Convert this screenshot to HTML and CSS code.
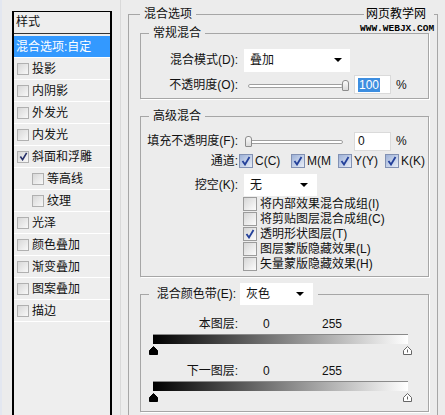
FILE: index.html
```html
<!DOCTYPE html>
<html>
<head>
    <meta charset="utf-8">
    <link rel="stylesheet" href="styles.css">
</head>
<body>
    <div class="page">
        <div class="side">
            <div class="styles-list">
                <div class="list-head">样式</div>
                <div class="list-item selected">混合选项:自定</div>
                <div class="list-item"><span class="box"></span>投影</div>
                <div class="list-item"><span class="box"></span>内阴影</div>
                <div class="list-item"><span class="box"></span>外发光</div>
                <div class="list-item"><span class="box"></span>内发光</div>
                <div class="list-item"><span class="box"><svg width="9" height="9" viewBox="0 0 10 10"><path d="M1.5 5 L4 8.5 L8.5 1" fill="none" stroke="#27306a" stroke-width="1.8"/></svg></span>斜面和浮雕</div>
                <div class="list-item sub"><span class="box"></span>等高线</div>
                <div class="list-item sub"><span class="box"></span>纹理</div>
                <div class="list-item"><span class="box"></span>光泽</div>
                <div class="list-item"><span class="box"></span>颜色叠加</div>
                <div class="list-item"><span class="box"></span>渐变叠加</div>
                <div class="list-item"><span class="box"></span>图案叠加</div>
                <div class="list-item"><span class="box"></span>描边</div>
            </div>
        </div>

        <div class="main">
            <fieldset class="outer">
                <legend>混合选项</legend>

                <fieldset class="group general">
                    <legend>常规混合</legend>
                    <div class="row first">
                        <span class="label">混合模式(D):</span>
                        <div class="select wide">叠加<span class="arrow"></span></div>
                    </div>
                    <div class="row tall">
                        <span class="label">不透明度(O):</span>
                        <div class="slider"><span class="track"></span><span class="thumb" style="left: 94px"></span></div>
                        <div class="num"><span class="sel">100</span></div>
                        <span class="pct">%</span>
                    </div>
                </fieldset>

                <fieldset class="group advanced">
                    <legend>高级混合</legend>
                    <div class="row fill">
                        <span class="label">填充不透明度(F):</span>
                        <div class="slider"><span class="track"></span><span class="thumb" style="left: -3px"></span></div>
                        <div class="num">0</div>
                        <span class="pct">%</span>
                    </div>
                    <div class="row channels">
                        <span class="label tight">通道:</span>
                        <div class="chan c"><span class="cb on"><svg width="10" height="10" viewBox="0 0 10 10"><path d="M1.5 5 L4 8.5 L8.5 1" fill="none" stroke="#23409a" stroke-width="1.8"/></svg></span><span class="chan-text">C(C)</span></div>
                        <div class="chan m"><span class="cb on"><svg width="10" height="10" viewBox="0 0 10 10"><path d="M1.5 5 L4 8.5 L8.5 1" fill="none" stroke="#23409a" stroke-width="1.8"/></svg></span><span class="chan-text">M(M</span></div>
                        <div class="chan y"><span class="cb on"><svg width="10" height="10" viewBox="0 0 10 10"><path d="M1.5 5 L4 8.5 L8.5 1" fill="none" stroke="#23409a" stroke-width="1.8"/></svg></span><span class="chan-text">Y(Y)</span></div>
                        <div class="chan k"><span class="cb on"><svg width="10" height="10" viewBox="0 0 10 10"><path d="M1.5 5 L4 8.5 L8.5 1" fill="none" stroke="#23409a" stroke-width="1.8"/></svg></span><span class="chan-text">K(K)</span></div>
                    </div>
                    <div class="row knockout">
                        <span class="label">挖空(K):</span>
                        <div class="select narrow">无<span class="arrow"></span></div>
                    </div>
                    <div class="checks">
                        <div class="check"><span class="cb"></span>将内部效果混合成组(I)</div>
                        <div class="check"><span class="cb"></span>将剪贴图层混合成组(C)</div>
                        <div class="check"><span class="cb"><svg width="10" height="10" viewBox="0 0 10 10"><path d="M1.5 5 L4 8.5 L8.5 1" fill="none" stroke="#23409a" stroke-width="1.8"/></svg></span>透明形状图层(T)</div>
                        <div class="check"><span class="cb"></span>图层蒙版隐藏效果(L)</div>
                        <div class="check"><span class="cb"></span>矢量蒙版隐藏效果(H)</div>
                    </div>
                </fieldset>

                <fieldset class="group band">
                    <legend class="band-legend">
                        <span class="label">混合颜色带(E):</span>
                        <div class="select narrow">灰色<span class="arrow"></span></div>
                    </legend>
                    <div class="layer-row">
                        <span class="label">本图层:</span>
                        <span class="v0">0</span>
                        <span>255</span>
                    </div>
                    <div class="bar"></div>
                    <div class="thumbs">
                        <svg width="9" height="9" viewBox="0 0 9 9"><path d="M4.5 0.5 L8.5 4.5 L8.5 8.5 L0.5 8.5 L0.5 4.5 Z" fill="#000" stroke="#000"/></svg>
                        <svg width="9" height="9" viewBox="0 0 9 9"><path d="M4.5 0.5 L8.5 4.5 L8.5 8.5 L0.5 8.5 L0.5 4.5 Z" fill="#fff" stroke="#666"/><path d="M4.5 3.5 L4.5 6.5" stroke="#666"/></svg>
                    </div>
                    <div class="layer-row second">
                        <span class="label">下一图层:</span>
                        <span class="v0">0</span>
                        <span>255</span>
                    </div>
                    <div class="bar"></div>
                    <div class="thumbs">
                        <svg width="9" height="9" viewBox="0 0 9 9"><path d="M4.5 0.5 L8.5 4.5 L8.5 8.5 L0.5 8.5 L0.5 4.5 Z" fill="#000" stroke="#000"/></svg>
                        <svg width="9" height="9" viewBox="0 0 9 9"><path d="M4.5 0.5 L8.5 4.5 L8.5 8.5 L0.5 8.5 L0.5 4.5 Z" fill="#fff" stroke="#666"/><path d="M4.5 3.5 L4.5 6.5" stroke="#666"/></svg>
                    </div>
                </fieldset>
            </fieldset>
        </div>

        <div class="watermark">
            <div class="wm-cn">网页教学网</div>
            <div class="wm-en">WWW.WEBJX.COM</div>
        </div>
    </div>
</body>
</html>
```

FILE: styles.css
```css
body {
    margin: 0;
    background: #ececec;
    font-family: "Liberation Sans", "Noto Sans CJK SC", sans-serif;
    font-size: 12px;
    line-height: 16px;
    color: #111;
    overflow: hidden;
}

.page {
    position: relative;
    display: flex;
    height: 415px;
    overflow: hidden;
}

/* left style list */
.side {
    width: 121px;
    flex-shrink: 0;
    box-sizing: border-box;
    border-left: 2px solid #e3e7f0;
    border-right: 1px solid #d9d9d9;
}

.styles-list {
    margin: 11px 0 0 10px;
    width: 100px;
    height: 420px;
    box-sizing: border-box;
    border: 1px solid #000;
    border-left-width: 2px;
    border-right-width: 2px;
    border-bottom: none;
    background: #eeeeee;
}

.list-head {
    height: 21px;
    line-height: 21px;
    padding-left: 2px;
    border-bottom: 1px solid #333;
    margin-bottom: 2px;
}

.list-item {
    height: 21px;
    display: flex;
    align-items: center;
    gap: 3px;
    padding-left: 3px;
    border-bottom: 1px solid #fff;
}

.list-item.sub {
    padding-left: 18px;
}

.list-item.selected {
    background: #3399ff;
    color: #fff;
    padding-left: 2px;
}

.box {
    width: 12px;
    height: 12px;
    box-sizing: border-box;
    border: 1px solid #b0b0b0;
    background: linear-gradient(135deg, #d8d8d8, #f8f8f8);
    display: flex;
    align-items: center;
    justify-content: center;
    flex-shrink: 0;
}

/* right options */
.main {
    margin-left: 7px;
    width: 310px;
    flex-shrink: 0;
}

fieldset {
    margin: 0;
    min-width: 0;
    border: 1px solid #a6a6a6;
}

legend {
    padding: 0 4px;
    line-height: 16px;
}

.outer {
    margin-top: 6px;
    padding: 3px 8px 0 11px;
    height: 430px;
    box-sizing: border-box;
    border-bottom: none;
}

.group {
    padding: 0 0 1px;
    box-shadow: 1px 1px 0 #fff;
}

.group legend {
    margin-left: 8px;
}

.advanced {
    margin-top: 9px;
    padding-bottom: 5px;
}

.band {
    margin-top: 6px;
    padding-bottom: 9px;
}

.row {
    display: flex;
    align-items: center;
    height: 24px;
}

.row.first {
    margin-top: 7px;
}

.row.tall {
    height: 25px;
}

.label {
    width: 97px;
    flex-shrink: 0;
    text-align: right;
    margin-right: 6px;
    white-space: nowrap;
}

.label.tight {
    margin-right: 1px;
}

.select {
    height: 23px;
    box-sizing: border-box;
    background: #fff;
    display: flex;
    align-items: center;
    padding: 0 8px 0 6px;
    flex-shrink: 0;
}

.select.wide {
    width: 106px;
}

.select.narrow {
    width: 73px;
    height: 22px;
    padding-right: 9px;
}

.arrow {
    margin-left: auto;
    width: 0;
    height: 0;
    border-left: 4px solid transparent;
    border-right: 4px solid transparent;
    border-top: 4px solid #000;
}

.slider {
    position: relative;
    width: 100px;
    height: 12px;
    margin-left: 4px;
    flex-shrink: 0;
}

.track {
    position: absolute;
    left: 0;
    top: 5px;
    width: 95px;
    height: 4px;
    box-sizing: border-box;
    border: 1px solid #a0a0a0;
    border-radius: 2px;
    background: #fff;
}

.thumb {
    position: absolute;
    top: 1px;
    width: 7px;
    height: 11px;
    box-sizing: border-box;
    border: 1px solid #8c8c8c;
    border-radius: 3px 3px 1px 1px;
    background: linear-gradient(#fbfbfb, #dadada);
}

.num {
    width: 37px;
    height: 19px;
    margin-left: 6px;
    box-sizing: border-box;
    background: #fff;
    border: 1px solid #dadada;
    padding-left: 3px;
    display: flex;
    align-items: center;
    flex-shrink: 0;
}

.num .sel {
    background: #3d8ee0;
    color: #fff;
    padding: 0 1px;
    line-height: 14px;
}

.pct {
    margin-left: 5px;
}

.row.fill {
    margin-top: 7px;
    height: 20px;
}

.row.channels {
    height: 19px;
}

.chan {
    display: flex;
    align-items: center;
    gap: 2px;
    flex-shrink: 0;
}

.chan.c {
    width: 52px;
}

.chan.m,
.chan.y {
    width: 47px;
}

.row.knockout {
    margin-top: 4px;
    height: 22px;
}

.cb {
    width: 14px;
    height: 14px;
    box-sizing: border-box;
    border: 1px solid #9c9c9c;
    background: linear-gradient(135deg, #d6d6d6, #fcfcfc);
    display: flex;
    align-items: center;
    justify-content: center;
    flex-shrink: 0;
}

.cb.on {
    border-color: #8291b3;
    background: linear-gradient(135deg, #9db1d8, #e8edf7);
}

.checks {
    margin-left: 102px;
}

.check {
    display: flex;
    align-items: center;
    gap: 3px;
    height: 15px;
    white-space: nowrap;
}

.band-legend {
    display: flex;
    align-items: center;
    margin-left: 12px;
    padding: 0 5px 0 0;
}

.band-legend .label {
    width: 87px;
    margin-right: 4px;
}

.layer-row {
    display: flex;
    align-items: center;
    height: 16px;
    margin-top: 11px;
}

.layer-row.second {
    margin-top: 8px;
}

.layer-row .v0 {
    margin-left: 19px;
    width: 59px;
}

.bar {
    margin: 2px 20px 0 12px;
    height: 10px;
    box-sizing: border-box;
    border-top: 1px solid #8a8a8a;
    background: linear-gradient(to right, #000, #fff);
}

.thumbs {
    display: flex;
    justify-content: space-between;
    width: 263px;
    height: 9px;
    margin: 2px 0 0 8px;
}

.watermark {
    position: absolute;
    left: 364px;
    top: 6px;
}

.wm-cn {
    background: #ececec;
    padding: 0 2px;
    color: #000;
}

.wm-en {
    margin: 3px 0 0 -4px;
    font-family: "Liberation Mono", monospace;
    font-weight: bold;
    font-size: 9.5px;
    line-height: 8px;
    color: #000;
}
```
